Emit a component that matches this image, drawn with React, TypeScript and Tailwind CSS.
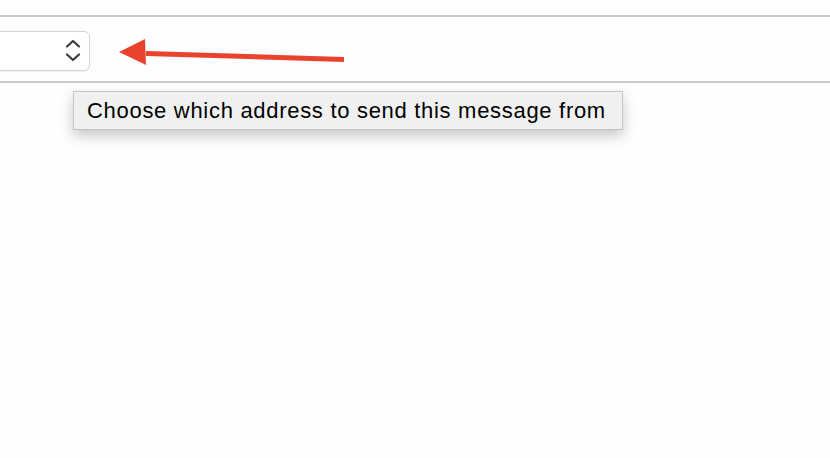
import React from 'react'

function Chevrons() {
  return (
    <svg width="16" height="24" viewBox="0 0 16 24" fill="none" className="block">
      <path d="M2 7.5 L8 2 L14 7.5" stroke="#3a3a3a" strokeWidth="2.2" strokeLinecap="round" strokeLinejoin="round" />
      <path d="M2 15.5 L8 21 L14 15.5" stroke="#3a3a3a" strokeWidth="2.2" strokeLinecap="round" strokeLinejoin="round" />
    </svg>
  )
}

function Arrow() {
  return (
    <svg width="240" height="40" viewBox="0 0 240 40" className="absolute left-[110px] top-[32px]">
      <path d="M36 21.5 L234 27.5" stroke="#e8432d" strokeWidth="5" strokeLinecap="butt" />
      <path d="M9 20 L35 7 L36 33 Z" fill="#e8432d" />
    </svg>
  )
}

export default function App() {
  return (
    <div className="relative w-[830px] h-[458px] bg-[#fefefe] overflow-hidden" style={{ fontFamily: '"Liberation Sans", Arial, sans-serif' }}>
      <div className="h-[15px]" />
      <div className="border-t-2 border-[#cacaca]" />
      <div className="h-[64px] pt-[14px]">
        <div className="ml-[-12px] w-[102px] h-[40px] rounded-[6px] border border-[#d4d4d4] bg-white shadow-[0_1px_1px_rgba(0,0,0,0.06)] flex items-center justify-end pr-[8px]">
          <Chevrons />
        </div>
      </div>
      <div className="border-t-2 border-[#cacaca]" />
      <Arrow />

      {/* tooltip */}
      <div className="absolute left-[73px] top-[91px] w-[550px] h-[39px] bg-[#f0f0f0] border border-[#c4c4c4] shadow-[0_6px_14px_rgba(0,0,0,0.22)] flex items-center pl-[13px] text-[22px] tracking-[0.7px] text-black whitespace-nowrap">
        Choose which address to send this message from
      </div>
    </div>
  )
}
